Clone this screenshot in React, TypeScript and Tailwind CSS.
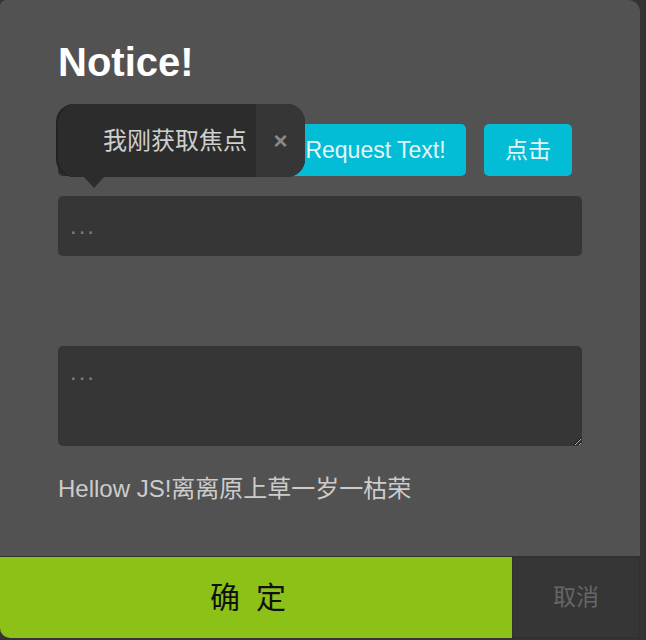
import React from "react";

export default function App() {
  const latin = "font-['Liberation_Sans','Noto_Sans_CJK_SC',sans-serif]";
  return (
    <div className={`h-[640px] w-[646px] bg-[#333333] ${latin}`}>
      <div className="w-[640px]">
        <div className="h-[556px] rounded-tl-[6px] rounded-tr-[12px] bg-[#525252] px-[58px] pt-[42px]">
          <h1 className="text-[40px] font-bold leading-none text-white">Notice!</h1>

          <div className="relative mt-[42px] flex h-[52px] items-stretch">
            <button aria-label="获取焦点" className="w-[209px] rounded-[5px] bg-[#2c2c2c]" />
            <button className="ml-[18px] w-[181px] rounded-[5px] bg-[#03bcd5] text-[23px] text-[#e6f4f6]">
              Request Text!
            </button>
            <button className="ml-[18px] w-[88px] rounded-[5px] bg-[#03bcd5] text-[23px] text-[#e6f4f6]">
              点击
            </button>

            <div className="absolute left-0 top-[-20px] h-[73px] w-[247px] rounded-[18px] bg-[#2c2c2c] shadow-[-2px_0_0_#222222]">
              <div className="flex h-full items-stretch">
                <div className="flex flex-1 items-center pl-[45px] text-[24px] leading-none text-[#cfcfcf]">
                  我刚获取焦点
                </div>
                <div className="flex w-[49px] items-center justify-center rounded-r-[18px] bg-[#363636] text-[24px] font-bold leading-none text-[#8a8a8a]">
                  ×
                </div>
              </div>
              <div className="absolute left-[25px] top-[72px] h-0 w-0 border-x-[11px] border-t-[12px] border-x-transparent border-t-[#2c2c2c]" />
            </div>
          </div>

          <input
            className="mt-[20px] block h-[60px] w-full rounded-[5px] bg-[#363636] pl-[12px] text-[24px] tracking-[2px] text-[#ddd] outline-none placeholder:text-[#7d7d7d]"
            placeholder="..."
          />

          <textarea
            className="mt-[90px] block h-[100px] w-full rounded-[5px] bg-[#363636] pl-[12px] pt-[14px] text-[24px] leading-[24px] tracking-[2px] text-[#ddd] outline-none placeholder:text-[#7d7d7d]"
            placeholder="..."
          />

          <p className="mt-[31px] text-[24px] leading-[24px] text-[#cccccc]">Hellow JS!离离原上草一岁一枯荣</p>
        </div>

        <div className="mt-px flex h-[81px]">
          <button className="flex w-[512px] items-center justify-center rounded-bl-[10px] bg-[#8cc118] text-[30px] leading-none tracking-[16px] text-[#111]">
            确定
          </button>
          <button className="flex flex-1 items-center justify-center border border-dotted border-[#2a2a2a] bg-[#363636] text-[23px] leading-none text-[#666]">
            取消
          </button>
        </div>
      </div>
    </div>
  );
}
